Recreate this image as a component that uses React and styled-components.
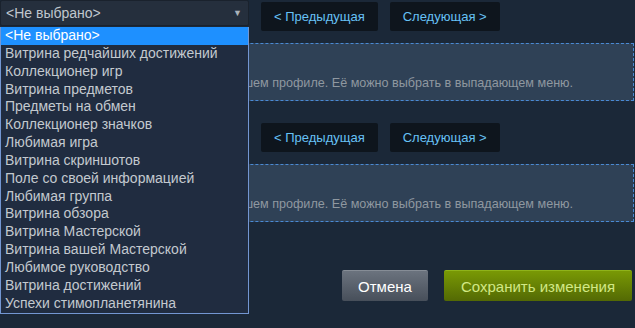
import React from "react";
import styled, { createGlobalStyle } from "styled-components";

const options = [
  "<Не выбрано>",
  "Витрина редчайших достижений",
  "Коллекционер игр",
  "Витрина предметов",
  "Предметы на обмен",
  "Коллекционер значков",
  "Любимая игра",
  "Витрина скриншотов",
  "Поле со своей информацией",
  "Любимая группа",
  "Витрина обзора",
  "Витрина Мастерской",
  "Витрина вашей Мастерской",
  "Любимое руководство",
  "Витрина достижений",
  "Успехи стимопланетянина",
];

const GlobalStyle = createGlobalStyle`
  html {
    overflow: hidden;
  }
  body {
    margin: 0;
    padding: 0;
    min-height: 328px;
    background: #1b2838;
    font-family: "Liberation Sans", Arial, sans-serif;
  }
`;

function Section({ open }) {
  return (
    <SectionBox>
      <Row open={open}>
        <SelectWrap>
          <Select>
            <SelectText>&lt;Не выбрано&gt;</SelectText>
            <Arrow>▼</Arrow>
          </Select>
          {open && (
            <Dropdown>
              {options.map((o, i) => (
                <Option key={o} active={i === 0}>
                  {o}
                </Option>
              ))}
            </Dropdown>
          )}
        </SelectWrap>
        <NavButton>&lt; Предыдущая</NavButton>
        <NavButton>Следующая &gt;</NavButton>
      </Row>
      <Panel>
        <PanelTitle>Витрина</PanelTitle>
        <PanelText>
          Эта витрина не будет показываться в вашем профиле. Её можно выбрать в
          выпадающем меню.
        </PanelText>
      </Panel>
    </SectionBox>
  );
}

export default function App() {
  return (
    <Page>
      <GlobalStyle />
      <Section open />
      <Section />
      <Footer>
        <CancelButton>Отмена</CancelButton>
        <SaveButton>Сохранить изменения</SaveButton>
      </Footer>
    </Page>
  );
}

const Page = styled.div`
  width: 634px;
  display: flex;
  flex-direction: column;
`;

const SectionBox = styled.div`
  display: flex;
  flex-direction: column;
  gap: 12px;
  margin-bottom: 20px;
`;

const Row = styled.div`
  position: relative;
  z-index: ${(p) => (p.open ? 10 : 1)};
  display: flex;
  align-items: flex-start;
  gap: 12px;
  height: 31px;
`;

const SelectWrap = styled.div`
  position: relative;
`;

const Select = styled.div`
  width: 249px;
  height: 26px;
  box-sizing: border-box;
  display: flex;
  align-items: center;
  justify-content: space-between;
  padding: 0 6px 0 5px;
  background: #252f3d;
  border: 1px solid #1a222d;
  border-radius: 2px;
`;

const SelectText = styled.span`
  font-size: 14px;
  color: #c0c7ce;
`;

const Arrow = styled.span`
  font-size: 9px;
  color: #aab2ba;
`;

const Dropdown = styled.div`
  position: absolute;
  top: 27px;
  left: 0;
  width: 249px;
  box-sizing: border-box;
  background: #202c40;
  border: 1px solid #7396d2;
  border-top: none;
`;

const Option = styled.div`
  height: 17.85px;
  line-height: 17.85px;
  padding-left: 4px;
  font-size: 14px;
  white-space: nowrap;
  color: ${(p) => (p.active ? "#ffffff" : "#c3c9cf")};
  background: ${(p) => (p.active ? "#1e90ff" : "transparent")};
`;

const NavButton = styled.div`
  margin-top: 2px;
  height: 29px;
  padding: 0 13px;
  display: flex;
  align-items: center;
  background: #0e151d;
  border-radius: 2px;
  color: #67c1f5;
  font-size: 13px;
  white-space: nowrap;
`;

const Panel = styled.div`
  position: relative;
  z-index: 0;
  height: 58px;
  box-sizing: border-box;
  padding: 8px 10px 10px 5px;
  display: flex;
  flex-direction: column;
  justify-content: space-between;
  background: #2f4156;
  border: 1px dashed #4a8ad4;
`;

const PanelTitle = styled.div`
  font-size: 14px;
  color: #c6d4df;
`;

const PanelText = styled.div`
  font-size: 12.6px;
  color: #8f98a0;
  white-space: nowrap;
`;

const Footer = styled.div`
  display: flex;
  justify-content: flex-end;
  gap: 16px;
  padding: 28px 2px 0 0;
`;

const BaseButton = styled.div`
  height: 31px;
  box-sizing: border-box;
  display: flex;
  align-items: center;
  justify-content: center;
  border-radius: 2px;
  font-size: 15px;
`;

const CancelButton = styled(BaseButton)`
  width: 86px;
  color: #ffffff;
  background: linear-gradient(to bottom, #6b737e 0%, #474f5a 100%);
  border-top: 1px solid #868d96;
`;

const SaveButton = styled(BaseButton)`
  width: 188px;
  color: #d2e885;
  background: linear-gradient(to bottom, #799905 0%, #536904 100%);
  border-top: 1px solid #8fb31a;
`;
